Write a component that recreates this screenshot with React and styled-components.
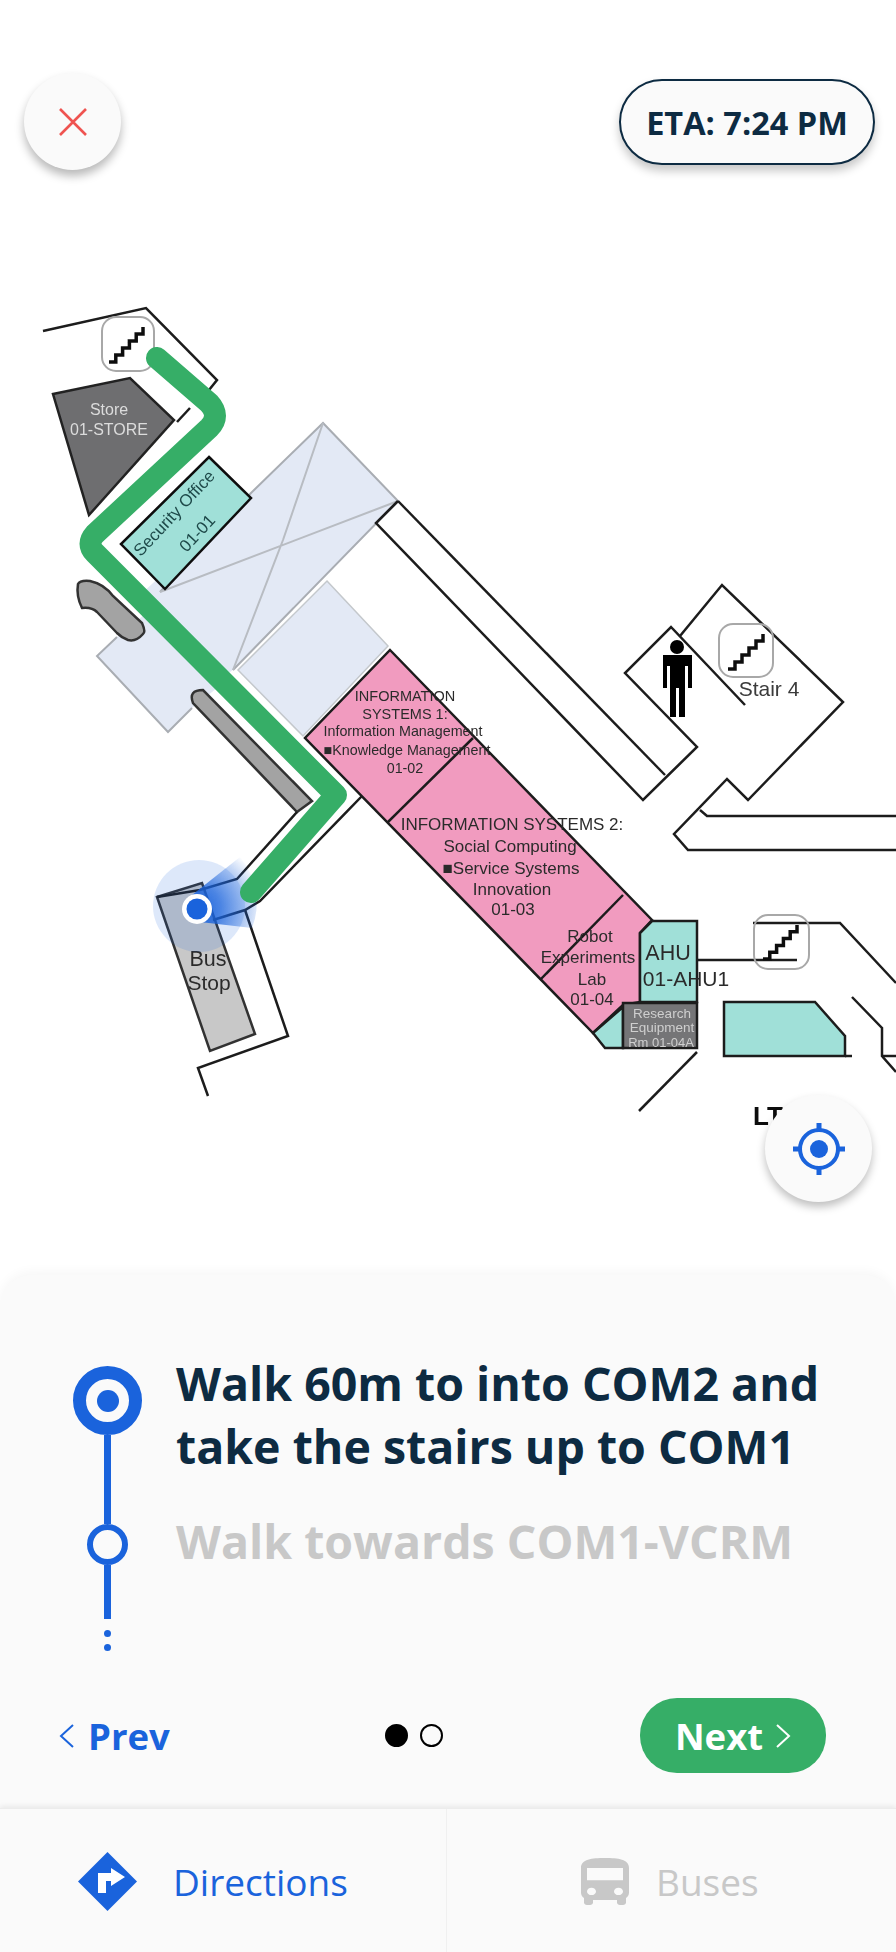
import styled, { createGlobalStyle } from 'styled-components';

const BLUE = '#1a63dc';
const GREEN = '#36ae67';
const NAVY = '#0d2b42';
const MUTED = '#c8c8c8';
const LINE = '#1c1c1c';

const GlobalStyle = createGlobalStyle`
    html, body {
        margin: 0;
        padding: 0;
        background: #fff;
        font-family: "Open Sans", sans-serif;
    }
`;

const Page = styled.div`
    width: 896px;
    height: 1952px;
    display: flex;
    flex-direction: column;
    overflow: hidden;
    background: #fff;
`;

const MapArea = styled.div`
    position: relative;
    height: 1275px;
    flex: none;
`;

const MapSvg = styled.svg`
    display: block;
`;

const CloseButton = styled.button`
    position: absolute;
    left: 24px;
    top: 73px;
    width: 97px;
    height: 97px;
    border: 0;
    padding: 0;
    border-radius: 50%;
    background: #fafafa;
    box-shadow: 0 6px 10px rgba(0, 0, 0, 0.28);
    display: flex;
    align-items: center;
    justify-content: center;
`;

const EtaPill = styled.div`
    position: absolute;
    left: 619px;
    top: 79px;
    width: 256px;
    height: 86px;
    box-sizing: border-box;
    border: 2.5px solid ${NAVY};
    border-radius: 43px;
    background: #fafafa;
    box-shadow: 0 6px 10px rgba(0, 0, 0, 0.22);
    display: flex;
    align-items: center;
    justify-content: center;
    color: ${NAVY};
    font-size: 32.5px;
    font-weight: 700;
`;

const LocateButton = styled.button`
    position: absolute;
    left: 765px;
    top: 1095px;
    width: 107px;
    height: 107px;
    border: 0;
    padding: 0;
    border-radius: 50%;
    background: #fafafa;
    box-shadow: 0 5px 9px rgba(0, 0, 0, 0.25);
    display: flex;
    align-items: center;
    justify-content: center;
`;

const Sheet = styled.section`
    flex: 1;
    display: flex;
    flex-direction: column;
    background: #fafafa;
    border-radius: 32px 32px 0 0;
    box-shadow: 0 -3px 12px rgba(0, 0, 0, 0.04);
    padding: 91px 0 0;
`;

const Steps = styled.div`
    display: flex;
    height: 332px;
    padding-left: 73px;
    gap: 34px;
`;

const Timeline = styled.div`
    width: 69px;
    display: flex;
    flex-direction: column;
    align-items: center;
`;

const CurrentNode = styled.div`
    width: 69px;
    height: 69px;
    box-sizing: border-box;
    border: 13px solid ${BLUE};
    border-radius: 50%;
    display: flex;
    align-items: center;
    justify-content: center;
    &::after {
        content: '';
        width: 22px;
        height: 22px;
        border-radius: 50%;
        background: ${BLUE};
    }
`;

const NextNode = styled.div`
    width: 41px;
    height: 41px;
    box-sizing: border-box;
    border: 6px solid ${BLUE};
    border-radius: 50%;
`;

const Track = styled.div`
    width: 7px;
    height: ${(p) => p.$length}px;
    background: ${BLUE};
`;

const TrackDot = styled.div`
    width: 7px;
    height: 7px;
    margin-top: ${(p) => p.$gap}px;
    border-radius: 50%;
    background: ${BLUE};
`;

const StepText = styled.div`
    display: flex;
    flex-direction: column;
    margin-top: -14px;
`;

const CurrentStep = styled.div`
    color: ${NAVY};
    font-size: 46.5px;
    font-weight: 700;
    line-height: 63px;
`;

const NextStep = styled.div`
    color: ${MUTED};
    font-size: 46.5px;
    font-weight: 700;
    line-height: 63px;
    margin-top: 32px;
`;

const Pager = styled.div`
    height: 75px;
    display: flex;
    align-items: center;
    justify-content: space-between;
    padding: 0 70px 0 59px;
`;

const PrevLink = styled.div`
    width: 128px;
    white-space: nowrap;
    display: flex;
    align-items: center;
    gap: 13px;
    color: ${BLUE};
    font-size: 36.5px;
    font-weight: 700;
`;

const Dots = styled.div`
    display: flex;
    gap: 12px;
`;

const Dot = styled.span`
    width: 23px;
    height: 23px;
    box-sizing: border-box;
    border-radius: 50%;
    border: 2.5px solid #000;
    background: ${(p) => (p.$active ? '#000' : 'transparent')};
`;

const NextButton = styled.div`
    width: 186px;
    height: 75px;
    border-radius: 37px;
    background: ${GREEN};
    color: #fff;
    font-size: 36.5px;
    font-weight: 700;
    display: flex;
    align-items: center;
    justify-content: center;
    gap: 12px;
`;

const Tabs = styled.nav`
    height: 144px;
    margin-top: 35px;
    flex: none;
    display: grid;
    grid-template-columns: 446px 1fr;
    background: #fafafa;
    border-top: 1px solid #ececec;
    box-shadow: 0 -2px 5px rgba(0, 0, 0, 0.07);
`;

const Tab = styled.div`
    display: flex;
    align-items: center;
    padding-left: ${(p) => p.$inset}px;
    gap: ${(p) => p.$gap}px;
    color: ${(p) => (p.$active ? BLUE : MUTED)};
    font-size: 37px;
    border-left: ${(p) => (p.$divider ? '1px solid #f0f0f0' : '0')};
`;

const MapLabel = styled.text`
    font-family: "Liberation Sans", Arial, sans-serif;
    font-size: ${(p) => p.$size}px;
    font-weight: ${(p) => (p.$bold ? 700 : 400)};
    fill: ${(p) => p.$color || '#2c2c2c'};
    text-anchor: middle;
`;

const stairPath = (x0, y0, x1, y1, n) => {
    const dx = (x1 - x0) / n;
    const dy = (y1 - y0) / n;
    let d = `M${x0} ${y0}`;
    for (let i = 1; i <= n; i++) {
        d += ` L${x0 + dx * i} ${y0 + dy * (i - 1)} L${x0 + dx * i} ${y0 + dy * i}`;
    }
    return d;
};

const StairIcon = ({ x, y, w, h, from, to, steps = 5 }) => (
    <g>
        <rect x={x} y={y} width={w} height={h} rx="14" fill="none" stroke="#a8a8a8" strokeWidth="2" />
        <path d={stairPath(from[0], from[1], to[0], to[1], steps)} fill="none" stroke="#111" strokeWidth="3.5" />
    </g>
);

// text, centre x, centre y, size, colour
const labels = [
    ['Store', 109, 409, 16, '#dcdcdc'],
    ['01-STORE', 109, 429, 16, '#dcdcdc'],
    ['INFORMATION', 405, 696, 14.5],
    ['SYSTEMS 1:', 405, 714, 14.5],
    ['Information Management', 403, 731, 14.3],
    ['■Knowledge Management', 407, 750, 14.3],
    ['01-02', 405, 768, 14.3],
    ['INFORMATION SYSTEMS 2:', 512, 824, 17],
    ['Social Computing', 510, 846, 17],
    ['■Service Systems', 511, 868, 17],
    ['Innovation', 512, 889, 17],
    ['01-03', 513, 909, 17],
    ['Robot', 590, 936, 17],
    ['Experiments', 588, 957, 17],
    ['Lab', 592, 979, 17],
    ['01-04', 592, 999, 17],
    ['AHU', 668, 952, 21.5],
    ['01-AHU1', 686, 979, 21],
    ['Research', 662, 1013, 13.5, '#cfcfcf'],
    ['Equipment', 662, 1027, 13.5, '#cfcfcf'],
    ['Rm 01-04A', 661, 1042, 13, '#cfcfcf'],
    ['Bus', 208, 958, 21.5],
    ['Stop', 209, 983, 21],
    ['Stair 4', 769, 689, 21, '#3a3a3a'],
];

const wallLines = [
    'M43 331 L146 308 L217 380 L209 390',
    'M190 408 L177 422',
    'M297 812 L237 879 L200 890 L157 897',
    'M362 796 L260 901 L245 910 L213 920',
    'M245 910 L288 1036 L198 1068 L208 1096',
    'M398 501 L376 523 L643 800 L697 747 L625 673 L671 627 L745 705',
    'M398 501 L665 775',
    'M680 636 L722 585 L843 702 L748 800 L727 779 L674 834 L688 850 L896 850',
    'M700 810 L707 816 L896 816',
    'M473 738 L388 822',
    'M623 895 L540 980',
    'M697 1052 L639 1111',
    'M753 923 L840 923 L896 983',
    'M697 960 L797 960',
    'M845 1056 L852 1056',
    'M852 997 L882 1028 L882 1056 L896 1072',
    'M882 1056 L896 1056',
];

function FloorMap() {
    return (
        <MapSvg width="896" height="1275" viewBox="0 0 896 1275">
            <defs>
                <filter id="soft" x="-5%" y="-5%" width="110%" height="110%">
                    <feGaussianBlur stdDeviation="0.7" />
                </filter>
                <radialGradient id="cone" gradientUnits="userSpaceOnUse" cx="197" cy="909" r="68">
                    <stop offset="0" stopColor={BLUE} stopOpacity="1" />
                    <stop offset="0.35" stopColor={BLUE} stopOpacity="0.75" />
                    <stop offset="1" stopColor={BLUE} stopOpacity="0" />
                </radialGradient>
            </defs>
            <g filter="url(#soft)">
                <path d="M233 670 L215 682 L140 595 L251 493 L323 423 L398 501 Z" fill="#e3e9f5" />
                <path d="M160 592 L251 493 L323 423 L398 501 L233 670" fill="none" stroke="#a9adb3" strokeWidth="2" />
                <path d="M283 540 L233 670 M398 501 L160 592 M323 423 L283 540" fill="none" stroke="#b8bcc2" strokeWidth="2" />
                <path d="M327 581 L388 646 L303 736 L238 670 Z" fill="#e3e9f5" stroke="#c4c8cc" strokeWidth="1.5" />
                <path d="M117 637 L97 656 L168 732 L192 708 L222 684 L150 610 Z" fill="#e3e9f5" />
                <path d="M117 637 L97 656 L168 732 L192 708" fill="none" stroke="#a9adb3" strokeWidth="2" />

                <path d="M78 584 Q80 580 90 581 Q104 584 113 596 L142 623 Q146 632 143 634 Q136 642 128 640 Q122 638 117 633 L97 612 Q92 607 82 608 Q76 596 78 584 Z" fill="#a3a3a3" stroke="#333" strokeWidth="2.5" />
                <path d="M193 703 Q188 690 203 690 L312 801 L297 812 Z" fill="#a3a3a3" stroke="#333" strokeWidth="2.5" />

                <path d="M53 394 L130 378 L174 420 L89 515 Z" fill="#6e6e70" stroke="#222" strokeWidth="2.5" />
                <path d="M209 457 L251 498 L165 589 L121 544 Z" fill="#a0e0d8" stroke="#111" strokeWidth="2.5" />

                <path d="M157 897 L202 883 L255 1034 L210 1051 Z" fill="#c8c8c8" stroke="#333" strokeWidth="2.5" />

                <path d="M390 650 L652 920 L640 933 L640 1002 L623 1005 L593 1033 L305 738 Z" fill="#f19bbf" stroke={LINE} strokeWidth="2.5" />
                <path d="M593 1033 L623 1007 L623 1048 L605 1048 Z" fill="#a0e0d8" stroke={LINE} strokeWidth="2.5" />
                <path d="M652 921 L697 921 L697 1002 L640 1002 L640 933 Z" fill="#a0e0d8" stroke={LINE} strokeWidth="2.5" />
                <rect x="623" y="1003" width="74" height="45" fill="#757577" stroke={LINE} strokeWidth="2.5" />
                <path d="M724 1002 L815 1002 L845 1036 L845 1056 L724 1056 Z" fill="#a0e0d8" stroke={LINE} strokeWidth="2.5" />

                {wallLines.map((d) => (
                    <path key={d} d={d} fill="none" stroke={LINE} strokeWidth="2.5" />
                ))}

                <StairIcon x={102} y={317} w={52} h={54} from={[109, 362]} to={[143, 327]} />
                <StairIcon x={719} y={624} w={54} h={53} from={[728, 669]} to={[763, 634]} />
                <StairIcon x={754} y={915} w={55} h={54} from={[763, 959]} to={[797, 925]} />

                <circle cx="677" cy="647" r="7" fill="#000" />
                <path d="M663 655 H692 V688 H688 V666 H685 V717 H679 V688 H676 V717 H670 V666 H667 V688 H663 Z" fill="#000" />

                {labels.map(([text, x, y, size, color]) => (
                    <MapLabel key={text} x={x} y={y} dy="0.35em" $size={size} $color={color}>{text}</MapLabel>
                ))}
                <MapLabel x="174" y="513" dy="0.35em" $size={17} $color="#1f4a4a" transform="rotate(-47 174 513)">Security Office</MapLabel>
                <MapLabel x="197" y="533" dy="0.35em" $size={17} $color="#1f4a4a" transform="rotate(-47 197 533)">01-01</MapLabel>
                <MapLabel x="768" y="1116" dy="0.35em" $size={26} $color="#111" $bold>LT</MapLabel>
            </g>

            <circle cx="199" cy="906" r="46" fill={BLUE} fillOpacity="0.15" />
            <path d="M192 895 L240 857 A70 70 0 0 1 252 928 L200 922 Z" fill="url(#cone)" />

            <path
                d="M157 358 L209 403 Q221 416 209 428 L95 534 Q86 544 95 553 L336 795 L251 892"
                fill="none"
                stroke={GREEN}
                strokeWidth="22"
                strokeLinecap="round"
                strokeLinejoin="round"
            />

            <circle cx="197" cy="909" r="15" fill="#fff" />
            <circle cx="197" cy="909" r="10.5" fill={BLUE} />
        </MapSvg>
    );
}

export default function App() {
    return (
        <Page>
            <GlobalStyle />
            <MapArea>
                <FloorMap />
                <CloseButton aria-label="Close">
                    <svg width="30" height="30" viewBox="0 0 30 30">
                        <path d="M2 2 L28 28 M28 2 L2 28" stroke="#ef5350" strokeWidth="2.6" fill="none" />
                    </svg>
                </CloseButton>
                <EtaPill>ETA: 7:24 PM</EtaPill>
                <LocateButton aria-label="Locate me">
                    <svg width="54" height="54" viewBox="0 0 54 54">
                        <circle cx="27" cy="27" r="19" fill="none" stroke={BLUE} strokeWidth="4" />
                        <circle cx="27" cy="27" r="9" fill={BLUE} />
                        <path d="M27 1 V8 M27 46 V53 M1 27 H8 M46 27 H53" stroke={BLUE} strokeWidth="5" />
                    </svg>
                </LocateButton>
            </MapArea>

            <Sheet>
                <Steps>
                    <Timeline>
                        <CurrentNode />
                        <Track $length={89} />
                        <NextNode />
                        <Track $length={54} />
                        <TrackDot $gap={11} />
                        <TrackDot $gap={7} />
                    </Timeline>
                    <StepText>
                        <CurrentStep>Walk 60m to into COM2 and<br />take the stairs up to COM1</CurrentStep>
                        <NextStep>Walk towards COM1-VCRM</NextStep>
                    </StepText>
                </Steps>
                <Pager>
                    <PrevLink>
                        <svg width="16" height="24" viewBox="0 0 16 24">
                            <path d="M14 1 L2 12 L14 23" fill="none" stroke={BLUE} strokeWidth="2" />
                        </svg>
                        Prev
                    </PrevLink>
                    <Dots>
                        <Dot $active />
                        <Dot />
                    </Dots>
                    <NextButton>
                        Next
                        <svg width="16" height="24" viewBox="0 0 16 24">
                            <path d="M2 1 L14 12 L2 23" fill="none" stroke="#fff" strokeWidth="2" />
                        </svg>
                    </NextButton>
                </Pager>
                <Tabs>
                    <Tab $active $inset={78} $gap={36}>
                        <svg width="59" height="59" viewBox="0 0 59 59">
                            <path d="M29.5 0 L59 29.5 L29.5 59 L0 29.5 Z" fill={BLUE} />
                            <path d="M20 41 V21 H33 V16 L47 25 L33 34 V29 H28 V41 Z" fill="#fff" />
                        </svg>
                        Directions
                    </Tab>
                    <Tab $divider $inset={134} $gap={27}>
                        <svg width="48" height="47" viewBox="4 2 16 19" preserveAspectRatio="none">
                            <path
                                fill={MUTED}
                                d="M4 16c0 .88.39 1.67 1 2.22V20c0 .55.45 1 1 1h1c.55 0 1-.45 1-1v-1h8v1c0 .55.45 1 1 1h1c.55 0 1-.45 1-1v-1.78c.61-.55 1-1.34 1-2.22V6c0-3.5-3.58-4-8-4s-8 .5-8 4v10zm3.5 1c-.83 0-1.5-.67-1.5-1.5S6.67 14 7.5 14s1.5.67 1.5 1.5S8.33 17 7.5 17zm9 0c-.83 0-1.5-.67-1.5-1.5s.67-1.5 1.5-1.5 1.5.67 1.5 1.5-.67 1.5-1.5 1.5zm1.5-6H6V6h12v5z"
                            />
                        </svg>
                        Buses
                    </Tab>
                </Tabs>
            </Sheet>
        </Page>
    );
}
